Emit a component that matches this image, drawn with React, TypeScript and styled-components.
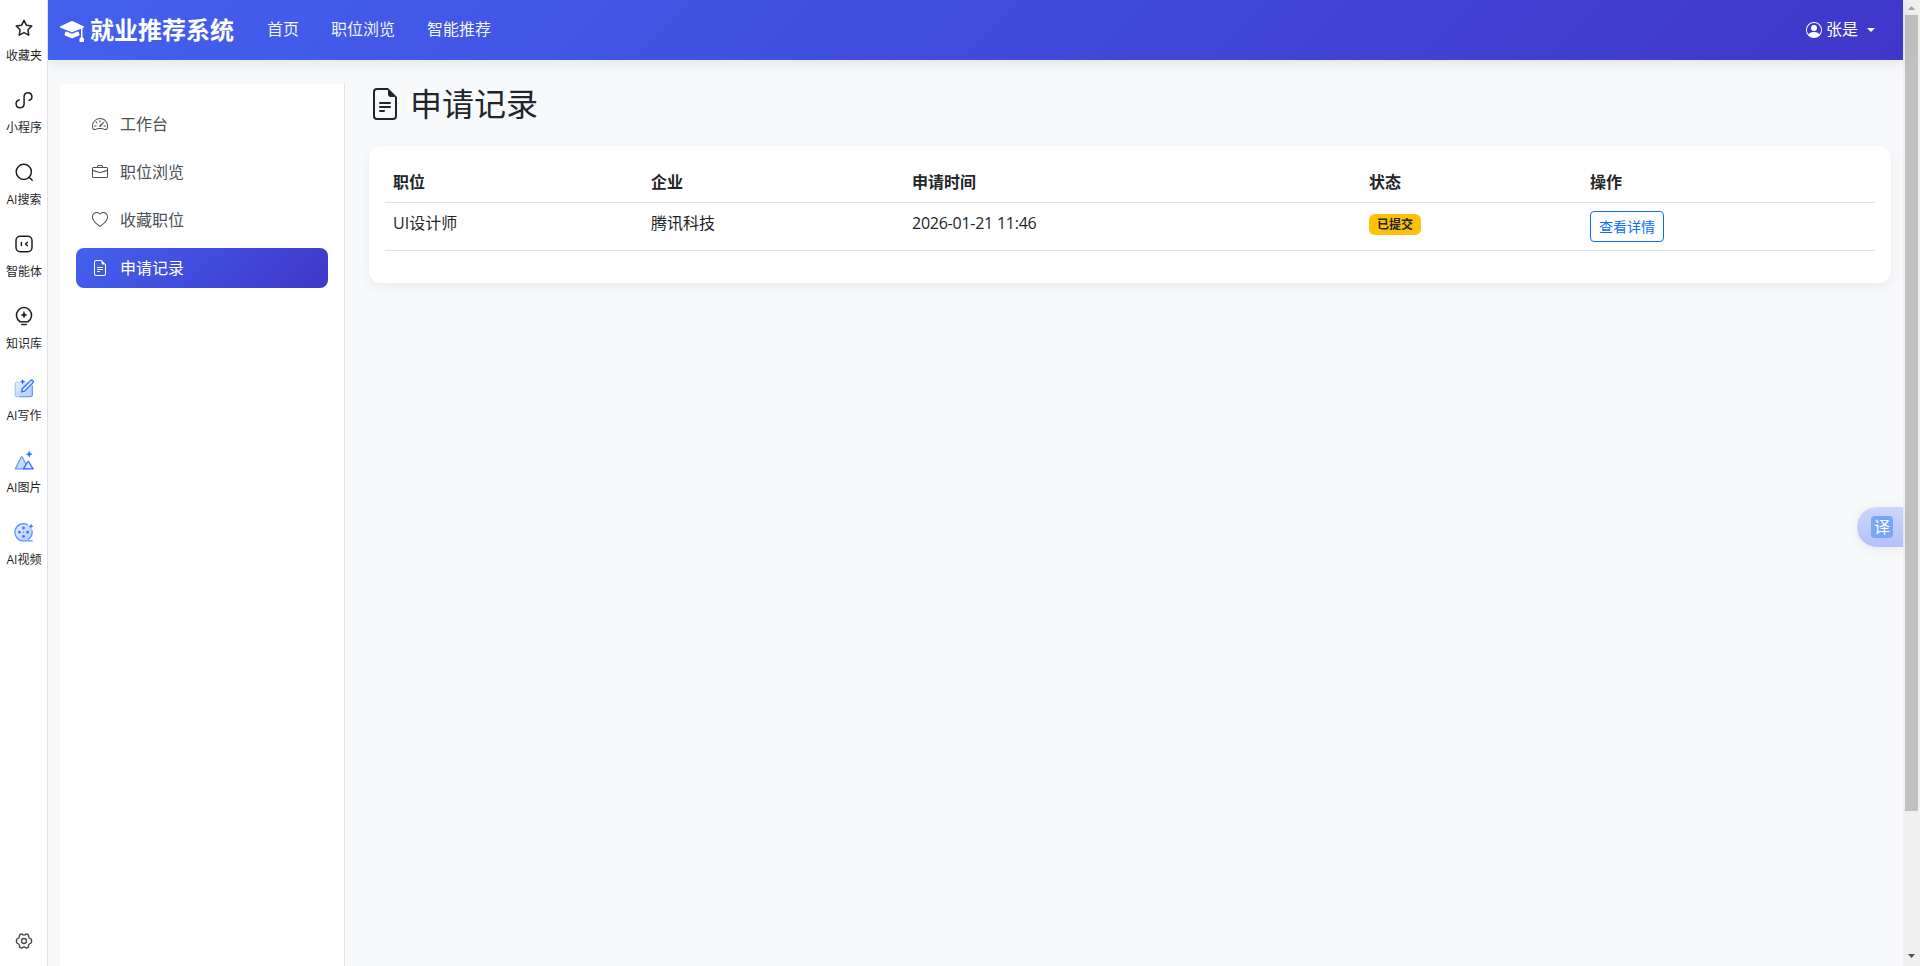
import React from "react";
import styled, { createGlobalStyle, css } from "styled-components";
import {
  BsMortarboardFill,
  BsPersonCircle,
  BsSpeedometer2,
  BsBriefcase,
  BsHeart,
  BsFileEarmarkText,
} from "react-icons/bs";

const GlobalStyle = createGlobalStyle`
  *, *::before, *::after { box-sizing: border-box; }
  body {
    margin: 0;
    overflow: hidden;
    background: #f8f9fb;
    color: #212529;
    font-family: "Open Sans", "Noto Sans CJK SC", sans-serif;
    font-size: 16px;
    line-height: 24px;
  }
`;

const Window = styled.div`
  display: flex;
  height: 966px;
  overflow: hidden;
`;

const Rail = styled.aside`
  flex: none;
  display: flex;
  flex-direction: column;
  width: 48px;
  padding-top: 18px;
  background: #fff;
  border-right: 1px solid #dfe1e4;
  position: relative;
  z-index: 2;
`;

const RailItem = styled.div`
  display: flex;
  flex-direction: column;
  align-items: center;
  height: 72px;
  padding-left: 1px;
  color: #1f1f1f;
  font-size: 12px;
  line-height: 16px;
  white-space: nowrap;

  svg { margin-bottom: 10px; }
`;

const RailSettings = styled.div`
  margin-top: auto;
  display: flex;
  justify-content: center;
  padding: 0 0 16px 1px;
  color: #4a4a4a;
`;

const Page = styled.div`
  position: relative;
  flex: 1;
  min-width: 0;
  display: flex;
  flex-direction: column;
`;

const Navbar = styled.header`
  flex: none;
  display: flex;
  align-items: center;
  height: 60px;
  padding: 0 28px 0 12px;
  color: #fff;
  background: linear-gradient(135deg, #4361ee, #3f37c9);
  box-shadow: 0 2px 15px rgba(0, 0, 0, 0.1);
`;

const Brand = styled.div`
  display: flex;
  align-items: center;
  gap: 6px;
  font-size: 24px;
  font-weight: 700;
  line-height: 36px;
`;

const NavLinks = styled.nav`
  display: flex;
  gap: 32px;
  flex: 1;
  margin-left: 33px;
  padding-bottom: 2px;
`;

const NavLink = styled.a`
  color: rgba(255, 255, 255, 0.95);
`;

const UserMenu = styled.div`
  display: flex;
  align-items: center;
`;

const UserName = styled.span`
  margin: 0 9px 2px 4px;
`;

const Caret = styled.span`
  border-top: 4px solid #fff;
  border-left: 4px solid transparent;
  border-right: 4px solid transparent;
`;

const Body = styled.div`
  flex: 1;
  display: flex;
  gap: 24px;
  padding: 24px 12px 0;
`;

const Sidebar = styled.nav`
  flex: none;
  display: flex;
  flex-direction: column;
  gap: 8px;
  width: 285px;
  padding: 20px 16px;
  background: #fff;
  border-right: 1px solid #dee2e6;
`;

const SideLink = styled.a<{ $active?: boolean }>`
  display: flex;
  align-items: center;
  gap: 12px;
  height: 40px;
  padding: 0 16px;
  border-radius: 8px;
  color: #495057;
  ${(p) =>
    p.$active &&
    css`
      color: #fff;
      background: linear-gradient(135deg, #4361ee, #3f37c9);
    `}
`;

const Main = styled.main`
  flex: 1;
  min-width: 0;
`;

const Title = styled.h2`
  display: flex;
  align-items: center;
  gap: 9px;
  margin: 0 0 22px;
  height: 40px;
  font-size: 32px;
  font-weight: 400;
  line-height: 40px;
`;

const Card = styled.section`
  padding: 16px 16px 32px;
  background: #fff;
  border-radius: 12px;
  box-shadow: 0 4px 12px rgba(0, 0, 0, 0.06);
`;

const Table = styled.table`
  width: 100%;
  table-layout: fixed;
  border-collapse: separate;
  border-spacing: 0;
`;

const Col = styled.col<{ $width: number }>`
  width: ${(p) => p.$width}px;
`;

const Th = styled.th`
  height: 41px;
  padding: 8px;
  border-bottom: 1px solid #dee2e6;
  text-align: left;
  font-weight: 700;
`;

const Td = styled.td`
  height: 48px;
  padding: 8px;
  border-bottom: 1px solid #dee2e6;
  vertical-align: top;
`;

const DateText = styled.span`
  letter-spacing: -0.25px;
`;

const Badge = styled.span`
  display: block;
  width: 52px;
  height: 21px;
  margin-top: 3px;
  border-radius: 6px;
  background: #ffc107;
  font-size: 12px;
  font-weight: 700;
  line-height: 21px;
  text-align: center;
`;

const DetailButton = styled.button`
  display: block;
  width: 74px;
  height: 31px;
  padding: 0;
  border: 1px solid #0d6efd;
  border-radius: 4px;
  background: #fff;
  color: #0d6efd;
  font: inherit;
  font-size: 14px;
  line-height: 29px;
`;

const TranslateTab = styled.div`
  position: absolute;
  top: 507px;
  right: 0;
  display: flex;
  align-items: center;
  width: 46px;
  height: 40px;
  padding-left: 14px;
  border-radius: 20px 0 0 20px;
  background: linear-gradient(180deg, #cbd7fc, #b4c0fc);
  box-shadow: 0 2px 12px rgba(0, 0, 0, 0.07);
`;

const TranslateIcon = styled.span`
  width: 22px;
  height: 22px;
  border-radius: 4px;
  background: #78a6f6;
  color: #fff;
  font-size: 16px;
  line-height: 22px;
  text-align: center;
`;

const Scrollbar = styled.div`
  flex: none;
  display: flex;
  flex-direction: column;
  align-items: center;
  width: 17px;
  background: #f0f0f0;
`;

const ScrollArrow = styled.div<{ $down?: boolean }>`
  display: flex;
  align-items: center;
  justify-content: center;
  height: 15px;
  margin-top: ${(p) => (p.$down ? "auto" : "0")};
  padding-bottom: ${(p) => (p.$down ? "5px" : "0")};
`;

const ScrollThumb = styled.div`
  width: 13px;
  height: 796px;
  background: #c1c1c1;
`;

const line = {
  width: 20,
  height: 20,
  viewBox: "0 0 20 20",
  fill: "none",
  stroke: "currentColor",
  strokeWidth: 1.5,
  strokeLinecap: "round" as const,
  strokeLinejoin: "round" as const,
};

const StarIcon = () => (
  <svg {...line}>
    <path d="M10 2.3l2.4 4.9 5.4.8-3.9 3.8.9 5.4-4.8-2.5-4.8 2.5.9-5.4L2.2 8l5.4-.8z" />
  </svg>
);

const MiniAppIcon = () => (
  <svg {...line}>
    <path d="M5.2 9.9a4 4 0 1 0 4.9 3.9V6.6a3.9 3.9 0 1 1 4.9 3.8" />
  </svg>
);

const SearchIcon = () => (
  <svg {...line}>
    <circle cx="9.8" cy="9.8" r="7.6" />
    <path d="M15.2 15.2l3 3" />
  </svg>
);

const AgentIcon = () => (
  <svg {...line}>
    <rect x="2" y="2.2" width="16" height="15.6" rx="4.2" />
    <path d="M7.4 8.4v3.2M13.4 8.2L11.6 10l1.8 1.8" />
  </svg>
);

const KnowledgeIcon = () => (
  <svg {...line}>
    <path d="M5.8 15.5a7.6 7.6 0 1 1 8.4 0M5.8 15.7h8.4M7.8 18.6h4.4" />
    <path d="M10 6l.9 2.1L13 9l-2.1.9L10 12l-.9-2.1L7 9l2.1-.9z" fill="currentColor" stroke="currentColor" strokeWidth=".5" />
  </svg>
);

const Gradient = ({ id }: { id: string }) => (
  <defs>
    <linearGradient id={id} x1="0" y1="0" x2="1" y2="1">
      <stop offset="0" stopColor="#e4edff" />
      <stop offset="1" stopColor="#b0ccff" />
    </linearGradient>
  </defs>
);

const WriteIcon = () => (
  <svg {...line} stroke="#2f6bff">
    <Gradient id="write" />
    <path d="M2.5 4H17a1.5 1.5 0 0 1 1.5 1.5V17a2 2 0 0 1-2 2H3a2 2 0 0 1-2-2V5.5A1.5 1.5 0 0 1 2.5 4z" fill="url(#write)" stroke="none" />
    <path d="M4 4.2H2.6A1.4 1.4 0 0 0 1.2 5.6V17a1.8 1.8 0 0 0 1.8 1.8h3" stroke="#9dbcff" strokeWidth="1" />
    <path d="M6 18.8h10.5a1.8 1.8 0 0 0 1.8-1.8V8" stroke="#5b8cff" strokeWidth="1.1" />
    <path d="M7.6 13.8l.7-3 8.2-8.2a1.6 1.6 0 0 1 2.3 2.3l-8.2 8.2z" fill="#dce8ff" strokeWidth="1.3" />
    <path d="M8.6 .8l.8 2 2 .8-2 .8-.8 2-.8-2-2-.8 2-.8z" fill="#2f6bff" stroke="none" />
  </svg>
);

const ImageIcon = () => (
  <svg {...line} stroke="#2f6bff" strokeWidth={1.3}>
    <Gradient id="image" />
    <path d="M1.4 18.9L6.9 7.6q.8-1.4 1.6 0l5.9 11.3z" fill="url(#image)" stroke="#6b98ff" />
    <path d="M9.5 18.9l4-6.9q.7-1 1.4 0l4.2 6.9z" fill="#d9e6ff" />
    <path d="M15.2 1.2l.9 2.1 2.1.9-2.1.9-.9 2.1-.9-2.1-2.1-.9 2.1-.9z" fill="#2f6bff" stroke="#2f6bff" strokeWidth=".4" />
  </svg>
);

const VideoIcon = () => (
  <svg {...line} stroke="#5b8cff" strokeWidth={1.2}>
    <Gradient id="video" />
    <circle cx="9.5" cy="10.2" r="8.6" fill="url(#video)" stroke="none" />
    <path d="M13.5 2.6A8.6 8.6 0 1 0 9.5 18.8h8.7M17.9 8.3a8.6 8.6 0 0 1-3.6 9" />
    <g fill="#3f78ff" stroke="none">
      <circle cx="9.5" cy="6" r="1.4" />
      <circle cx="5.4" cy="10.2" r="1.4" />
      <circle cx="13.6" cy="10.2" r="1.4" />
      <circle cx="9.5" cy="14.4" r="1.4" />
      <circle cx="9.5" cy="10.2" r=".7" />
      <path d="M17 1.4l.8 2 2 .8-2 .8-.8 2-.8-2-2-.8 2-.8z" />
    </g>
  </svg>
);

const GearIcon = () => (
  <svg {...line} width="18" height="18" strokeWidth={1.6}>
    <path d="M7 2.2Q8 2.1 8.4 2.9Q10 3.7 11.6 2.9Q12 2.1 13 2.2L14.8 3.2Q15.2 3.8 15 5Q15.3 6.8 17.2 7.4Q18.3 7.8 18.3 8.6V11.4Q18.3 12.2 17.2 12.6Q15.3 13.2 15 15Q15.2 16.2 14.8 16.8L13 17.8Q12 17.9 11.6 17.1Q10 16.3 8.4 17.1Q8 17.9 7 17.8L5.2 16.8Q4.8 16.2 5 15Q4.7 13.2 2.8 12.6Q1.7 12.2 1.7 11.4V8.6Q1.7 7.8 2.8 7.4Q4.7 6.8 5 5Q4.8 3.8 5.2 3.2z" />
    <circle cx="10" cy="10" r="2.7" />
  </svg>
);

const railItems = [
  { label: "收藏夹", Icon: StarIcon },
  { label: "小程序", Icon: MiniAppIcon },
  { label: "AI搜索", Icon: SearchIcon },
  { label: "智能体", Icon: AgentIcon },
  { label: "知识库", Icon: KnowledgeIcon },
  { label: "AI写作", Icon: WriteIcon },
  { label: "AI图片", Icon: ImageIcon },
  { label: "AI视频", Icon: VideoIcon },
];

const sideLinks = [
  { label: "工作台", Icon: BsSpeedometer2 },
  { label: "职位浏览", Icon: BsBriefcase },
  { label: "收藏职位", Icon: BsHeart },
  { label: "申请记录", Icon: BsFileEarmarkText, active: true },
];

const columns = [
  { label: "职位", width: 258 },
  { label: "企业", width: 261 },
  { label: "申请时间", width: 457 },
  { label: "状态", width: 221 },
  { label: "操作", width: 293 },
];

export default function App() {
  return (
    <Window>
      <GlobalStyle />
      <Rail>
        {railItems.map(({ label, Icon }) => (
          <RailItem key={label}>
            <Icon />
            {label}
          </RailItem>
        ))}
        <RailSettings>
          <GearIcon />
        </RailSettings>
      </Rail>
      <Page>
        <Navbar>
          <Brand>
            <BsMortarboardFill size={24} />
            就业推荐系统
          </Brand>
          <NavLinks>
            <NavLink>首页</NavLink>
            <NavLink>职位浏览</NavLink>
            <NavLink>智能推荐</NavLink>
          </NavLinks>
          <UserMenu>
            <BsPersonCircle size={16} />
            <UserName>张是</UserName>
            <Caret />
          </UserMenu>
        </Navbar>
        <Body>
          <Sidebar>
            {sideLinks.map(({ label, Icon, active }) => (
              <SideLink key={label} $active={active}>
                <Icon size={16} />
                {label}
              </SideLink>
            ))}
          </Sidebar>
          <Main>
            <Title>
              <BsFileEarmarkText size={32} />
              申请记录
            </Title>
            <Card>
              <Table>
                <colgroup>
                  {columns.map((c) => (
                    <Col key={c.label} $width={c.width} />
                  ))}
                </colgroup>
                <thead>
                  <tr>
                    {columns.map((c) => (
                      <Th key={c.label}>{c.label}</Th>
                    ))}
                  </tr>
                </thead>
                <tbody>
                  <tr>
                    <Td>UI设计师</Td>
                    <Td>腾讯科技</Td>
                    <Td>
                      <DateText>2026-01-21 11:46</DateText>
                    </Td>
                    <Td>
                      <Badge>已提交</Badge>
                    </Td>
                    <Td>
                      <DetailButton>查看详情</DetailButton>
                    </Td>
                  </tr>
                </tbody>
              </Table>
            </Card>
          </Main>
        </Body>
        <TranslateTab>
          <TranslateIcon>译</TranslateIcon>
        </TranslateTab>
      </Page>
      <Scrollbar>
        <ScrollArrow>
          <svg width="7" height="4" viewBox="0 0 7 4" fill="#a3a3a3">
            <path d="M0 4L3.5 0 7 4z" />
          </svg>
        </ScrollArrow>
        <ScrollThumb />
        <ScrollArrow $down>
          <svg width="7" height="4" viewBox="0 0 7 4" fill="#505050">
            <path d="M0 0l3.5 4L7 0z" />
          </svg>
        </ScrollArrow>
      </Scrollbar>
    </Window>
  );
}
